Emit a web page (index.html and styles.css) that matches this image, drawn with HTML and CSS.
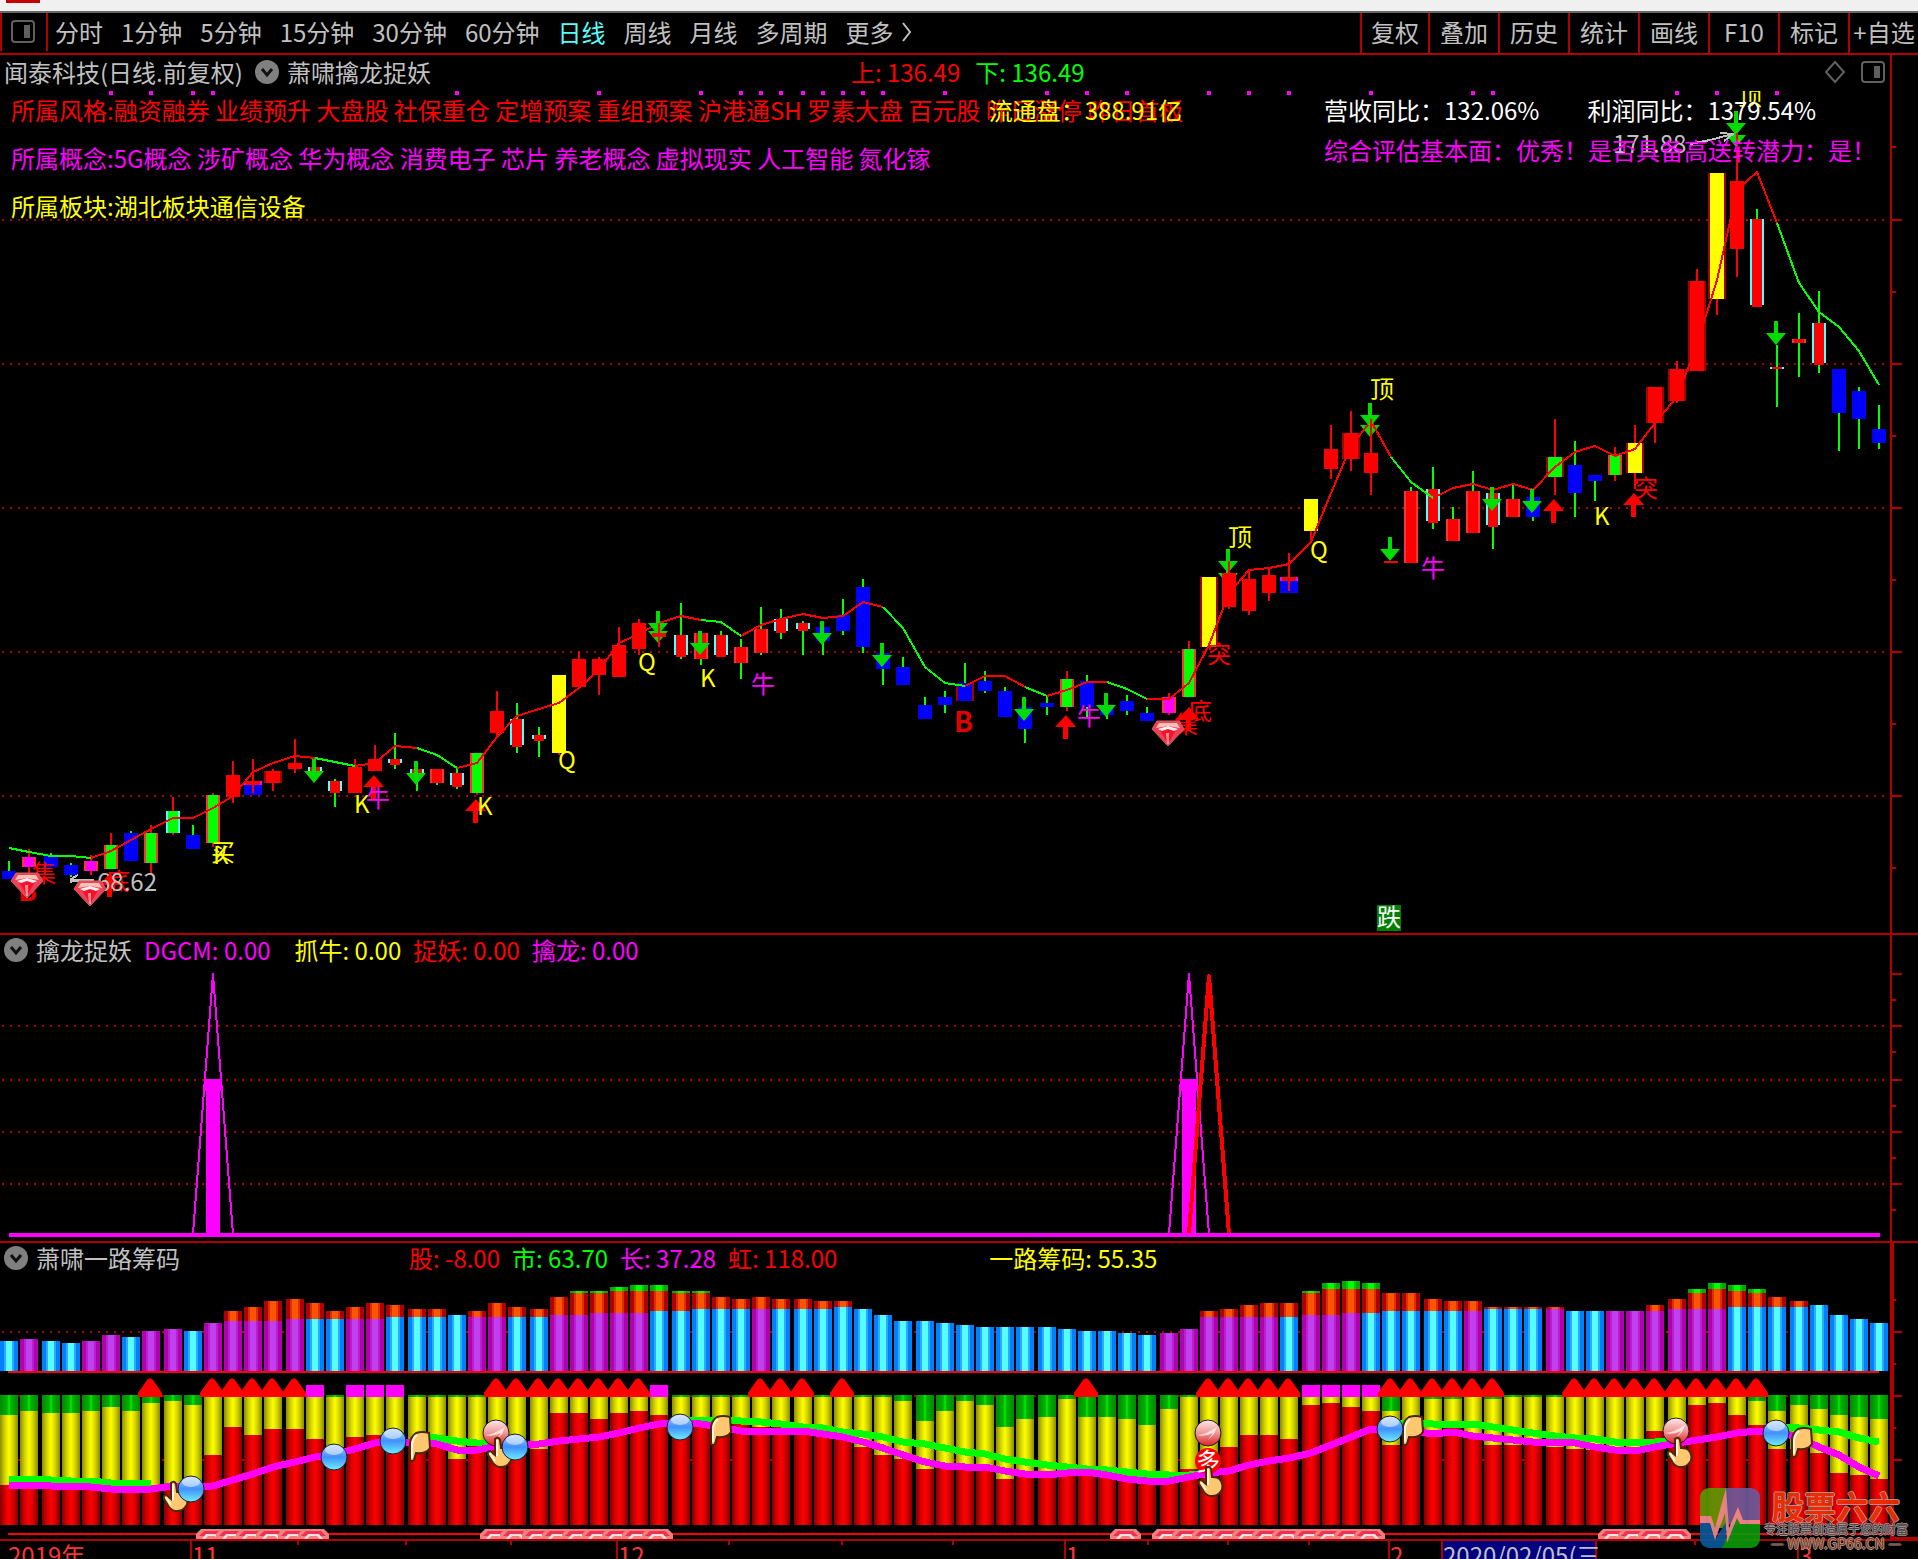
FILE: index.html
```html
<!DOCTYPE html>
<html lang="zh-CN">
<head>
    <meta charset="UTF-8">
    <meta name="viewport" content="width=device-width, initial-scale=1.0">
    <title>闻泰科技 日线</title>
    <link rel="stylesheet" href="styles.css">
</head>
<body>
    <div class="window-strip"><span class="app-logo"></span></div>

    <nav class="toolbar">
        <button type="button" class="layout-btn" aria-label="布局">
            <svg width="26" height="24" viewBox="0 0 26 24"><rect x="2" y="1" width="22" height="21" rx="3" fill="none" stroke="#606060" stroke-width="2"/><rect x="14" y="5" width="6" height="13" fill="#606060"/></svg>
        </button>
        <div class="periods">
            <button type="button">分时</button>
            <button type="button">1分钟</button>
            <button type="button">5分钟</button>
            <button type="button">15分钟</button>
            <button type="button">30分钟</button>
            <button type="button">60分钟</button>
            <button type="button" class="active">日线</button>
            <button type="button">周线</button>
            <button type="button">月线</button>
            <button type="button">多周期</button>
            <button type="button">更多<svg class="more" width="10" height="20" viewBox="0 0 10 20"><path d="M1 1l7 9l-7 9" fill="none" stroke="#c0c0c0" stroke-width="2"/></svg></button>
        </div>
        <div class="tools">
            <button type="button">复权</button>
            <button type="button">叠加</button>
            <button type="button">历史</button>
            <button type="button">统计</button>
            <button type="button">画线</button>
            <button type="button">F10</button>
            <button type="button">标记</button>
            <button type="button">+自选</button>
        </div>
    </nav>

    <main>
        <!-- Main K-line panel -->
        <section class="panel">
            <header class="panel-head main-head">
                <span>闻泰科技(日线.前复权)</span>
                <button type="button" class="fold" aria-label="展开"><svg width="24" height="24" viewBox="0 0 24 24"><circle cx="12" cy="12" r="12" fill="#808080"/><path d="M7 9l5 6l5-6" fill="none" stroke="#111" stroke-width="3"/></svg></button>
                <span>萧啸擒龙捉妖</span>
                <span class="limits"><span class="red">上: 136.49</span><span class="green">下: 136.49</span></span>
                <span class="head-icons">
                    <svg width="22" height="24" viewBox="0 0 22 24"><path d="M11 2l9 10l-9 10l-9-10z" fill="none" stroke="#606060" stroke-width="2"/></svg>
                    <svg width="26" height="24" viewBox="0 0 26 24"><rect x="2" y="2" width="22" height="20" rx="3" fill="none" stroke="#606060" stroke-width="2"/><rect x="14" y="6" width="6" height="12" fill="#606060"/></svg>
                </span>
            </header>
            <div class="plot">
                <svg id="kline" class="chart" viewBox="0 91 1918 842"></svg>
                <div class="info-left">
                    <p class="red">所属风格:融资融券 业绩预升 大盘股 社保重仓 定增预案 重组预案 沪港通SH 罗素大盘 百元股 昨日涨停 昨日首板</p>
                    <p class="magenta">所属概念:5G概念 涉矿概念 华为概念 消费电子 芯片 养老概念 虚拟现实 人工智能 氮化镓</p>
                    <p class="yellow">所属板块:湖北板块通信设备</p>
                </div>
                <p class="float-cap yellow">流通盘：388.91亿</p>
                <div class="info-right">
                    <p class="growth"><span>营收同比：132.06%</span><span>利润同比：1379.54%</span></p>
                    <p class="magenta">综合评估基本面：优秀！是否具备高送转潜力：是！</p>
                </div>
            </div>
        </section>

        <!-- Dragon indicator panel -->
        <section class="panel">
            <header class="panel-head">
                <button type="button" class="fold" aria-label="展开"><svg width="24" height="24" viewBox="0 0 24 24"><circle cx="12" cy="12" r="12" fill="#808080"/><path d="M7 9l5 6l5-6" fill="none" stroke="#111" stroke-width="3"/></svg></button>
                <span>擒龙捉妖</span>
                <span class="legend"><span class="magenta dgcm">DGCM: 0.00</span><span class="yellow">抓牛: 0.00</span><span class="red">捉妖: 0.00</span><span class="magenta">擒龙: 0.00</span></span>
            </header>
            <svg id="dragon" class="chart" viewBox="0 965 1918 276"></svg>
        </section>

        <!-- Chips panel -->
        <section class="panel last">
            <header class="panel-head chips-head">
                <button type="button" class="fold" aria-label="展开"><svg width="24" height="24" viewBox="0 0 24 24"><circle cx="12" cy="12" r="12" fill="#808080"/><path d="M7 9l5 6l5-6" fill="none" stroke="#111" stroke-width="3"/></svg></button>
                <span>萧啸一路筹码</span>
                <span class="legend chips"><span class="red">股: -8.00</span><span class="green">市: 63.70</span><span class="magenta">长: 37.28</span><span class="red">虹: 118.00</span></span>
                <span class="chip-value yellow">一路筹码: 55.35</span>
            </header>
            <svg id="chips" class="chart" viewBox="0 1273 1918 298"></svg>
        </section>
    </main>

    <div class="watermark">
        <svg width="60" height="60" viewBox="0 0 60 60">
            <clipPath id="wmClip"><rect width="60" height="60" rx="9"/></clipPath>
            <g clip-path="url(#wmClip)">
                <path d="M0 0h27v40H0z" fill="#5a9a00"/>
                <path d="M26 0h34v36H26z" fill="#6a5a9c"/>
                <path d="M0 30h11l5 20l10-16v26H0z" fill="#0a5a9c"/>
                <path d="M22 60l16-36l4 12h18v24z" fill="#0a9a0a"/>
                <path d="M0 28h11l4 12L26 0l3 40l9-21l5 13h17v4H40l-3-6l-10 25l-2-30l-10 27l-5-17H0z" fill="#f09090"/>
            </g>
        </svg>
        <div class="wm-text">
            <strong>股票六六</strong>
            <span class="wm-slogan">专注股票创造属于您的财富</span>
            <span class="wm-url">— WWW.GP66.CN —</span>
        </div>
    </div>

    <script src="script.js"></script>
</body>
</html>
```
FILE: styles.css
```css
/* Reset margin and padding */
* {
    margin: 0;
    padding: 0;
    box-sizing: border-box;
}

body {
    position: relative;
    height: 100vh;
    overflow: hidden;
    background-color: #000;
    color: #c0c0c0;
    font-family: "Noto Sans CJK SC", "Noto Sans", sans-serif;
    font-size: 24px;
    line-height: 24px;
    white-space: nowrap;
}

button {
    background: none;
    border: none;
    color: inherit;
    font: inherit;
    cursor: pointer;
}

svg {
    display: block;
}

/* Text colours */
.red { color: #f00; }
.green { color: #0f0; }
.magenta { color: #f0f; }
.yellow { color: #ff0; }

/* Top strip */
.window-strip {
    height: 13px;
    background-color: #f0f0f0;
    border-bottom: 2px solid #686868;
}

.app-logo {
    display: block;
    width: 34px;
    height: 3px;
    margin-left: 6px;
    background-color: #c80000;
}

/* Toolbar */
.toolbar {
    display: flex;
    height: 42px;
    padding-bottom: 2px;
    border-bottom: 2px solid #b00000;
    box-shadow: inset 0 -2px #000;
}

.layout-btn {
    width: 48px;
    padding: 0 8px;
    border-left: 2px solid #b00000;
    border-right: 2px solid #b00000;
}

.periods {
    display: flex;
    gap: 18px;
    margin-left: 7px;
}

.periods button {
    display: flex;
    align-items: center;
}

.periods .active {
    color: #5ff;
}

.more {
    margin-left: 8px;
}

.tools {
    display: flex;
    margin-left: auto;
    margin-bottom: -2px;
}

.tools button {
    width: 70px;
    padding-bottom: 2px;
    border-left: 2px solid #b00000;
}

.tools button:first-child {
    width: 68px;
}

/* Panels */
.panel {
    border-bottom: 2px solid #b00000;
}

.panel.last {
    border-bottom: none;
}

.panel-head {
    display: flex;
    align-items: flex-start;
    height: 30px;
    margin-right: 26px;
    padding: 3px 0 0 4px;
    border-right: 2px solid #b00000;
}

.main-head {
    height: 36px;
    padding-top: 5px;
}

.chips-head {
    margin-right: 24px;
    border-right-width: 4px;
}

.fold {
    width: 24px;
    height: 24px;
    margin-right: 8px;
}

.main-head .fold {
    margin-left: 12px;
}

.limits {
    display: flex;
    gap: 15px;
    margin-left: 420px;
}

.head-icons {
    display: flex;
    gap: 14px;
    margin-left: auto;
    margin-right: 4px;
}

.legend {
    display: flex;
    gap: 12px;
    margin-left: 12px;
}

.dgcm {
    margin-right: 12px;
}

.legend.chips {
    margin-left: 229px;
}

.chip-value {
    margin-left: 152px;
}

.chart {
    width: 100%;
    height: auto;
}

.chart text {
    font-size: 24px;
}

.chart .buy {
    font-size: 28px;
    font-weight: 700;
}

/* Stock info written over the K-line */
.plot {
    position: relative;
}

.info-left,
.info-right,
.float-cap {
    position: absolute;
    top: 7px;
}

.info-left {
    left: 11px;
    display: flex;
    flex-direction: column;
    gap: 24px;
}

.float-cap {
    right: 736px;
}

.info-right {
    right: 42px;
    display: flex;
    flex-direction: column;
    gap: 16px;
}

.growth {
    display: flex;
    gap: 48px;
    color: #fff;
}

/* Watermark */
.watermark {
    position: absolute;
    right: 10px;
    bottom: 9px;
    display: flex;
    gap: 4px;
    opacity: 0.9;
}

.wm-text {
    display: flex;
    flex-direction: column;
    align-items: center;
    text-shadow: 1px 0 #b0a0a0, -1px 0 #b0a0a0, 0 1px #b0a0a0, 0 -1px #b0a0a0;
}

.wm-text strong {
    color: #f03000;
    font-size: 32px;
    line-height: 34px;
}

.wm-slogan {
    color: #504848;
    font-size: 12px;
    line-height: 14px;
}

.wm-url {
    color: #a04010;
    font-size: 14px;
    line-height: 14px;
}
```
FILE: script.js
```js
const LEFT_AXIS = 1890;

// centre of the n-th trading day
function cx(i) {
    return 2 * Math.floor(4.82 + 10.1612 * i) + 1;
}

function rect(x, y, w, h, fill) {
    return `<rect x="${x}" y="${y}" width="${w}" height="${h}" fill="${fill}" shape-rendering="crispEdges"/>`;
}

function line(points, color, width) {
    return `<polyline points="${points.map(p => p.join(",")).join(" ")}" fill="none" stroke="${color}" stroke-width="${width}" stroke-linejoin="round" shape-rendering="crispEdges"/>`;
}

function label(x, y, text, color, extra) {
    return `<text x="${x}" y="${y}" fill="${color}" ${extra || ""}>${text}</text>`;
}

function grid(y) {
    return `<path d="M2 ${y}H1888" stroke="#b00000" stroke-width="2" stroke-dasharray="2 6"/>`;
}

function tick(y, w) {
    return rect(LEFT_AXIS, y - 1, w, 2, "#b00000");
}

function downArrow(x, y) {
    return `<path d="M${x - 2} ${y}h4v12h8l-10 12l-10-12h8z" fill="#00dc00"/>`;
}

function upArrow(x, y) {
    return `<path d="M${x} ${y}l10 12h-8v12h-5v-12h-8z" fill="#f00"/>`;
}

function gem(x, y) {
    return `<g transform="translate(${x - 16} ${y})"><path d="M5 0h22l5 8l-16 17l-16-17z" fill="#f04058"/><path d="M7 2h18l3 5l-12-2l-12 2z" fill="#ffc0b8"/><path d="M8 9l8-3l8 3l-8 14z" fill="#f8102c"/><path d="M6 8l10-3l10 3l-4 2l-6-2l-6 2z" fill="#fff0f0"/><path d="M14 12h3v11h-2z" fill="#ff9090"/><path d="M5 0h22l5 8l-16 17l-16-17z" fill="none" stroke="#d06060"/></g>`;
}

/* ---------- K-line ---------- */
// [type, body top, body bottom, high, low]
const days = [
    ["B", 871, 879, 861, 879], ["M", 857, 867, 849, 873], ["B", 856, 867, 853, 867], ["B", 865, 875, 863, 877],
    ["M", 861, 871, 855, 875], ["G", 845, 869, 833, 869], ["B", 833, 861, 831, 861], ["G", 833, 863, 825, 873],
    ["H", 811, 833, 797, 835], ["B", 835, 849, 825, 849], ["G", 795, 843, 793, 847], ["R", 775, 797, 761, 803],
    ["X", 781, 795, 759, 793], ["D", 771, 783, 769, 791], ["R", 763, 769, 739, 773], ["C", 767, 775, 767, 775],
    ["C", 781, 793, 779, 807], ["R", 767, 793, 759, 793], ["R", 759, 771, 745, 771], ["C", 759, 765, 733, 769],
    ["C", 769, 775, 769, 791], ["E", 769, 783, 769, 785], ["C", 773, 787, 769, 789], ["G", 753, 793, 753, 795],
    ["R", 711, 733, 691, 737], ["C", 719, 747, 703, 753], ["C", 735, 741, 727, 757], ["Y", 675, 753, 675, 755],
    ["R", 659, 687, 651, 687], ["R", 659, 675, 657, 695], ["R", 645, 677, 627, 677], ["R", 623, 649, 619, 655],
    ["R", 633, 637, 623, 647], ["C", 635, 657, 603, 659], ["E", 633, 659, 633, 665], ["C", 635, 657, 631, 657],
    ["E", 647, 663, 639, 679], ["E", 629, 653, 607, 655], ["C", 619, 633, 609, 639], ["C", 623, 631, 621, 655],
    ["B", 627, 641, 627, 655], ["B", 615, 631, 599, 635], ["B", 587, 647, 579, 653], ["B", 653, 669, 653, 685],
    ["B", 667, 685, 657, 685], ["B", 705, 719, 697, 719], ["B", 697, 705, 691, 713], ["N", 683, 701, 663, 701],
    ["B", 681, 691, 671, 693], ["B", 691, 717, 687, 717], ["B", 707, 729, 707, 743], ["B", 703, 707, 697, 715],
    ["G", 679, 707, 671, 711], ["B", 681, 707, 675, 717], ["B", 709, 715, 709, 719], ["B", 701, 711, 695, 715],
    ["B", 713, 721, 707, 721], ["M", 697, 713, 693, 715], ["G", 649, 697, 641, 697], ["Z", 577, 647, 577, 647],
    ["R", 573, 607, 561, 609], ["R", 579, 611, 570, 615], ["R", 575, 593, 568, 601], ["X", 577, 593, 553, 591],
    ["Y", 499, 531, 499, 541], ["R", 449, 469, 425, 479], ["D", 433, 459, 411, 471], ["R", 453, 473, 419, 495],
    ["R", 561, 563, 561, 563], ["E", 491, 563, 487, 563], ["C", 489, 523, 467, 529], ["E", 519, 541, 507, 541],
    ["E", 491, 533, 471, 533], ["C", 493, 527, 487, 549], ["E", 499, 517, 485, 517], ["B", 497, 517, 497, 521],
    ["K", 457, 477, 419, 495], ["B", 465, 493, 441, 517], ["B", 475, 481, 475, 501], ["G", 455, 475, 447, 481],
    ["Z", 443, 473, 425, 489], ["D", 387, 423, 387, 443], ["D", 369, 401, 361, 403], ["D", 281, 371, 269, 371],
    ["Z", 173, 299, 173, 315], ["R", 181, 249, 133, 277], ["C", 219, 307, 209, 307], ["C", 367, 369, 345, 407],
    ["E", 339, 343, 313, 377], ["C", 323, 365, 291, 373], ["B", 369, 413, 369, 451], ["B", 391, 419, 387, 449],
    ["B", 429, 443, 405, 449]
];

// edge colour, body colour, wick colour, half width
const styles = {
    R: ["#f00", "#f00", "#f00", 7], B: ["#00f", "#00f", "#0f0", 7], Y: ["#ff0", "#ff0", "#f00", 7],
    G: ["#f33", "#0f0", "#f00", 7], M: ["#f33", "#f0f", "#f00", 7], H: ["#5ff", "#0f0", "#f00", 7],
    C: ["#5ff", "#f00", "#0f0", 7], E: ["#f33", "#f00", "#0f0", 7], D: ["#a00000", "#f00", "#f00", 9],
    K: ["#a00000", "#0f0", "#f00", 9], Z: ["#a00000", "#ff0", "#f00", 9], N: ["#a00000", "#00f", "#0f0", 9]
};

function candle(day, i) {
    const [type, top, bottom, high, low] = day;
    const x = cx(i);
    if (type === "X") {
        return rect(x - 9, top, 18, bottom - top, "#00f") + rect(x - 9, top, 18, 4, "#f0f") +
            rect(x - 7, top, 14, 4, "#f00") + rect(x - 1, high, 2, low - high, "#f00");
    }
    const [edge, body, wick, half] = styles[type];
    const edgeH = type === "C" && bottom - top > 4 ? bottom - top - 2 : bottom - top;
    return rect(x - 1, high, 2, low - high, wick) +
        rect(x - half, top, half * 2, edgeH, edge) +
        rect(x - half + 2, top, half * 2 - 4, bottom - top, body);
}

const average = [
    848, 852, 856, 856, 858, 851, 840, 829, 818, 818, 808, 796, 772, 763, 756, 758, 762, 766, 763, 746, 748, 755, 768,
    763, 737, 716, 709, 703, 688, 670, 643, 634, 623, 616, 620, 622, 636, 625, 619, 614, 618, 616, 602, 607, 628, 667,
    683, 686, 676, 676, 687, 696, 690, 682, 682, 689, 699, 699, 683, 645, 593, 570, 568, 564, 542, 493, 446, 421, 457,
    482, 498, 488, 484, 490, 484, 490, 467, 452, 446, 456, 449, 423, 397, 345, 280, 190, 172, 223, 283, 312, 327, 351, 385
];
// [first day, last day, falling]
const legs = [
    [0, 4, 1], [4, 15, 0], [15, 17, 1], [17, 20, 0], [20, 22, 1], [22, 34, 0], [34, 36, 1], [36, 43, 0], [43, 47, 1],
    [47, 50, 0], [50, 51, 1], [51, 54, 0], [54, 56, 1], [56, 68, 0], [68, 70, 1], [70, 87, 0], [87, 92, 1]
];

function drawKline() {
    let out = "";
    [219, 363, 507, 651, 795].forEach(y => {
        out += grid(y + 1) + tick(y + 1, 12) + tick(y + 73, 6);
    });
    out += tick(147, 6) + rect(LEFT_AXIS, 91, 2, 842, "#b00000");

    // signal dots
    [5, 7, 9, 10, 22, 29, 34, 36, 37, 38, 39, 40, 41, 42, 43, 46, 51, 53, 55, 59, 61, 63, 67, 72, 73, 82, 84, 87]
        .forEach(i => { out += rect(cx(i) - 2, 91, 4, 4, "#f0f"); });

    // second arrow heads that sit behind the candles
    [[658, 619], [1228, 561], [1370, 413], [1736, 123]].forEach(a => { out += downArrow(a[0], a[1]); });

    days.forEach((day, i) => { out += candle(day, i); });
    legs.forEach(([from, to, down]) => {
        const points = [];
        for (let i = from; i <= to; i++) points.push([cx(i), average[i]]);
        out += line(points, down ? "#0f0" : "#f00", 2);
    });

    [[314, 759], [416, 761], [658, 611], [700, 631], [822, 621], [882, 643], [1024, 697], [1106, 693], [1228, 549],
        [1370, 403], [1390, 537], [1492, 487], [1532, 489], [1736, 111], [1776, 321]]
        .forEach(a => { out += downArrow(a[0], a[1]); });
    out += rect(1370, 419, 2, 30, "#f00") + rect(1736, 133, 2, 50, "#f00") + rect(1228, 561, 2, 14, "#f00");
    out += rect(652, 633, 14, 4, "#f00") + rect(658, 623, 2, 24, "#f00");

    [[110, 873], [374, 775], [476, 799], [1066, 715], [1189, 707], [1554, 499], [1634, 493]]
        .forEach(a => { out += upArrow(a[0], a[1]); });

    out += label(18, 901, "B", "#e00000", 'class="buy"') + label(954, 732, "B", "#e00000", 'class="buy"');
    out += label(32, 882, "集", "#f00") + label(106, 890, "底", "#f00");
    out += label(1174, 733, "集", "#f00") + label(1188, 720, "底", "#f00");
    out += label(211, 861, "买", "#ff0") + label(213, 864, "K", "#ff0");
    [[354, 813], [477, 815], [700, 687], [1594, 525]].forEach(p => { out += label(p[0], p[1], "K", "#ff0"); });
    [[558, 769], [638, 671], [1310, 559]].forEach(p => { out += label(p[0], p[1], "Q", "#ff0"); });
    [[366, 807], [751, 693], [1077, 725], [1421, 577]].forEach(p => { out += label(p[0], p[1], "牛", "#f0f"); });
    [[1207, 663], [1634, 497]].forEach(p => { out += label(p[0], p[1], "突", "#f00"); });
    [[1228, 546], [1370, 398], [1738, 105]].forEach(p => { out += label(p[0], p[1], "顶", "#ff0"); });

    out += label(1613, 153, "171.88", "#c0c0c0") + line([[1690, 144], [1710, 140], [1733, 134]], "#c0c0c0", 2) +
        line([[1720, 133], [1733, 134], [1724, 141]], "#c0c0c0", 2);
    out += label(97, 891, "68.62", "#c0c0c0") + line([[94, 880], [72, 880]], "#c0c0c0", 3) +
        line([[78, 875], [71, 879], [71, 883]], "#c0c0c0", 2);
    out += gem(27, 873) + gem(90, 881) + gem(1168, 721);
    out += rect(1377, 905, 24, 26, "#008000") + label(1377, 926, "跌", "#fff");
    document.getElementById("kline").innerHTML = out;
}

/* ---------- Dragon indicator ---------- */
function drawDragon() {
    let out = "";
    [1025, 1079, 1131, 1183].forEach(y => { out += grid(y + 1) + tick(y + 1, 12); });
    out += tick(974, 12);
    [1000, 1052, 1106, 1158, 1210].forEach(y => { out += tick(y, 6); });
    out += rect(LEFT_AXIS, 965, 2, 276, "#b00000");
    [10, 58].forEach(i => {
        out += rect(cx(i) - 7, 1079, 14, 156, "#f0f");
        out += rect(cx(i) - 9, 1079, 18, 12, "#f0f");
        out += line([[cx(i - 1), 1234], [cx(i), 974], [cx(i + 1), 1234]], "#f0f", 2);
    });
    out += line([[cx(58), 1234], [cx(59), 976], [cx(60), 1234]], "#f00", 4);
    out += rect(9, 1233, 1871, 4, "#f0f");
    document.getElementById("dragon").innerHTML = out;
}

/* ---------- Chips ---------- */
// colour, base top, orange top, green top
const volume = `c101 p99 c101 c103 p101 p95 c97 p91 p89 c91 p83 p81,71 p81,67 p81,61 p79,59 c79,63 c79,71 p79,67 p79,63
c77,65 c77,69 c77,69 c75 p77,71 p77,63 c77,67 c77,69 p75,57 p75,53,51 p73,53,51 p73,51,47 p73,51,45 c71,51,45 c71,53,51
c69,53,51 c69,57 c69,59 p69,57 c69,59 c69,59 c69,61 c67,61 c69 c75 c81 c81 c83 c85 c87 c87 c87 c87 c89 c91 c91 c93 c95
p93 p89 p77,71 p77,69 p77,65 p77,63 c77,63 p75,53,51 p75,49,43 p73,49,41 c73,49,43 c71,53 c71,53 c71,59 c71,61 p71,61
c69,67 c69,67 c69,67 p69,67 c71 c71 p71 p71 p71,65 p69,59 p69,53,49 p69,49,43 c67,51,45 c67,53,49 c67,57 c67,61 c65 c75
c79 c83`.split(/\s+/);

// bottom of the green part, top of the red part
const holders = [
    [175, 245], [171, 245], [173, 245], [173, 247], [171, 247], [167, 247], [171, 249], [163, 249], [161, 247],
    [165, 245], [155, 215], [155, 187], [155, 195], [155, 189], [155, 189], [155, 199], [157, 207], [155, 197],
    [155, 195], [155, 197], [157, 200], [157, 207], [157, 219], [157, 205], [155, 200], [155, 200], [155, 209],
    [155, 173], [155, 173], [155, 179], [155, 173], [155, 171], [155, 175], [157, 181], [157, 181], [157, 181],
    [157, 183], [155, 187], [155, 187], [155, 189], [157, 191], [155, 197], [157, 207], [157, 215], [161, 219],
    [181, 229], [171, 227], [161, 229], [165, 229], [187, 239], [179, 233], [177, 233], [159, 231], [177, 231],
    [177, 235], [179, 239], [185, 240], [169, 241], [157, 229], [155, 215], [155, 207], [155, 195], [155, 195],
    [155, 199], [155, 165], [155, 163], [155, 167], [155, 171], [171, 205], [155, 195], [159, 190], [159, 187],
    [155, 195], [159, 205], [157, 205], [157, 205], [157, 207], [155, 209], [155, 210], [155, 211], [155, 211],
    [155, 191], [155, 185], [155, 165], [155, 163], [155, 175], [161, 185], [171, 209], [165, 209], [169, 213],
    [175, 233], [177, 235], [179, 239]
];

const fast = [
    245, 245, 246, 246, 247, 249, 249, 249, 246, 247, 246, 240, 234, 227, 222, 217, 214, 209, 203, 201, 203, 204, 210,
    210, 206, 206, 204, 201, 199, 197, 193, 188, 184, 182, 184, 187, 191, 191, 191, 191, 194, 197, 202, 208, 215, 222,
    226, 227, 227, 231, 234, 235, 233, 232, 235, 239, 241, 241, 237, 233, 231, 225, 221, 218, 213, 205, 197, 189, 189,
    191, 194, 192, 196, 198, 200, 202, 202, 203, 207, 210, 211, 207, 203, 200, 197, 193, 191, 191, 198, 207, 215, 227, 236
];
// [first day, values]
const slow = [
    [0, [239, 239, 240, 241, 241, 243, 243, 243]],
    [20, [197, 198, 201, 203, 204]],
    [33, [181, 180, 180, 181, 182, 184, 187, 188, 192, 194, 197, 202, 204, 208, 212, 214, 219, 222, 225, 227, 229,
        230, 232, 234, 235, 235, 234]],
    [68, [184, 183, 184, 184, 184, 187, 190, 193, 196, 198, 199, 202, 203, 202, 201]],
    [87, [187, 188, 190, 192, 198, 202]]
];

function gradient(id, stops) {
    return `<linearGradient id="${id}">${stops.map(s => `<stop offset="${s[0]}" stop-color="${s[1]}"/>`).join("")}</linearGradient>`;
}

function banded(id, edge, mid, core) {
    return gradient(id, [[0, edge], [0.22, edge], [0.22, mid], [0.33, mid], [0.33, core], [0.67, core], [0.67, mid],
        [0.78, mid], [0.78, edge], [1, edge]]);
}

function ball(x, y, kind) {
    let out = `<circle cx="${x}" cy="${y}" r="13" fill="url(#${kind}Ball)" stroke="#202030"/>`;
    if (kind === "blue") out += `<ellipse cx="${x}" cy="${y - 7}" rx="9" ry="5" fill="#fff" opacity="0.5"/>`;
    if (kind === "red") out += `<path d="M${x - 11} ${y + 2}q10-1 20-8l-3 7l-6 6l5-7q-8 4-16 2z" fill="#fff" opacity="0.7"/>`;
    return out;
}

function handUp(x, y) {
    return `<g transform="translate(${x} ${y})"><path d="M8 2q3-3 5 1l1 8q7 0 9 4q3 6 0 10q-3 5-9 5q-5 0-8-4l-5-8q-1-4 2-4l5 4z" fill="#ffc870" stroke="#4a2808" stroke-width="2"/><path d="M10 3v16M3 16l5 8" fill="none" stroke="#fff4e0" stroke-width="2"/></g>`;
}

function handDown(x, y) {
    return `<g transform="translate(${x} ${y})"><path d="M8 2q6-2 13 0l1 15q-4 6-14 5l-2 7q-2 2-4 0V12q1-7 6-10z" fill="#ffc870" stroke="#4a2808" stroke-width="2"/><path d="M9 4q-5 4-5 11v12" fill="none" stroke="#fff4e0" stroke-width="2"/></g>`;
}

function drawChips() {
    const Y = 1240;
    let out = "<defs>" +
        banded("c", "#0080ff", "#30a8ff", "#5ff") + banded("p", "#b000b0", "#b820cc", "#c040f0") +
        banded("orange", "#b00000", "#d83000", "#ff5500") + banded("lime", "#00a800", "#00c800", "#0f0") +
        gradient("darkGreen", [[0, "#008800"], [0.4, "#00b000"], [0.5, "#00f000"], [0.6, "#00b000"], [1, "#008800"]]) +
        gradient("gold", [[0, "#8c8c00"], [0.25, "#d0d000"], [0.5, "#ff0"], [0.75, "#d0d000"], [1, "#8c8c00"]]) +
        gradient("blood", [[0, "#800000"], [0.25, "#d00000"], [0.5, "#f00"], [0.75, "#d00000"], [1, "#800000"]]) +
        '<linearGradient id="blueBall" x2="0" y2="1"><stop offset="0" stop-color="#b0d0f8"/><stop offset="0.5" stop-color="#4090ff"/><stop offset="1" stop-color="#70f0ff"/></linearGradient>' +
        '<linearGradient id="redBall" x2="0" y2="1"><stop offset="0" stop-color="#ffe8e8"/><stop offset="0.45" stop-color="#f0a0a0"/><stop offset="1" stop-color="#e02020"/></linearGradient></defs>';

    [1332, 1396, 1460].forEach(y => { out += grid(y) + tick(y, 12); });
    [1300, 1364, 1428].forEach(y => { out += tick(y, 6); });
    out += rect(1890, 1273, 4, 268, "#b00000");

    volume.forEach((v, i) => {
        const [base, orange, green] = v.slice(1).split(",").map(Number);
        const x = cx(i) - 9;
        if (green) out += rect(x, Y + green, 18, orange - green, "url(#lime)");
        if (orange) out += rect(x, Y + orange, 18, base - orange, "url(#orange)");
        out += rect(x, Y + base, 18, 131 - base, `url(#${v[0]})`);
    });
    out += rect(8, 1371, 1871, 2, "#f00");

    holders.forEach(([green, red], i) => {
        const x = cx(i) - 9;
        if (green > 155) out += rect(x, Y + 155, 18, green - 155, "url(#darkGreen)");
        out += rect(x, Y + green, 18, red - green, "url(#gold)");
        out += rect(x, Y + red, 18, 285 - red, "url(#blood)");
    });

    [15, 17, 18, 19, 32, 64, 65, 66, 67].forEach(i => { out += rect(cx(i) - 9, 1385, 18, 12, "#f0f"); });
    [[7, 7], [10, 14], [24, 31], [37, 39], [41, 41], [53, 53], [59, 63], [68, 73], [77, 86]].forEach(([a, b]) => {
        for (let i = a; i <= b; i++) {
            const x = cx(i) - 1;
            out += `<path d="M${x} 1378l3 2l9 13v4h-24v-4l9-13z" fill="#f00"/>`;
        }
    });

    slow.forEach(([start, values]) => {
        out += line(values.map((v, n) => [cx(start + n), Y + v]), "#0f0", 7);
    });
    out += line(fast.map((v, i) => [cx(i), Y + v]), "#f0f", 7);

    [[496, 193], [1208, 193], [1676, 191]].forEach(b => { out += ball(b[0], Y + b[1], "red"); });
    out += `<circle cx="1208" cy="1461" r="13" fill="#f00"/><text x="1208" y="1470" fill="#fff" text-anchor="middle">多</text>`;
    [[163, 241], [487, 197], [1198, 226], [1667, 197]].forEach(h => { out += handUp(h[0], Y + h[1]); });
    [[408, 191], [709, 175], [1401, 175], [1790, 187]].forEach(h => { out += handDown(h[0], Y + h[1]); });
    [[191, 249], [334, 217], [393, 201], [515, 207], [680, 187], [1390, 189], [1776, 193]]
        .forEach(b => { out += ball(b[0], Y + b[1], "blue"); });

    // bottom line with gem tops
    out += rect(8, 1533, 1882, 2, "#f00");
    [[10, 15], [24, 32], [55, 55], [57, 67], [79, 82]].forEach(([a, b]) => {
        for (let i = a; i <= b; i++) {
            const x = cx(i) - 17;
            out += `<path d="M${x} 1539v-5l5-5h21l5 5v5z" fill="#f08080"/><path d="M${x + 3} 1536l5-5h15l5 5z" fill="#f03050"/><path d="M${x + 6} 1539l4-5h11l4 5l-3 0l-3-3h-7l-3 3z" fill="#ffe0e0"/>`;
        }
    });
    out += rect(0, 1539, 1890, 2, "#b00000") + rect(1890, 1537, 28, 4, "#b00000");

    // date axis
    [297, 405, 510, 728, 841, 952, 1147, 1227, 1308, 1694].forEach(x => { out += rect(x, 1541, 2, 4, "#b00000"); });
    [190, 616, 1064, 1388, 1797].forEach(x => { out += rect(x, 1541, 2, 30, "#b00000"); });
    out += rect(1441, 1541, 156, 30, "#b00000") + rect(1443, 1541, 152, 30, "#000080");
    [[8, "2019年"], [192, "11"], [618, "12"], [1066, "1"], [1390, "2"], [1799, "3"]].forEach(d => {
        out += label(d[0], 1565, d[1], "#f33");
    });
    out += label(1443, 1565, "2020/02/05(三", "#c0c0c0");
    document.getElementById("chips").innerHTML = out;
}

drawKline();
drawDragon();
drawChips();
```
